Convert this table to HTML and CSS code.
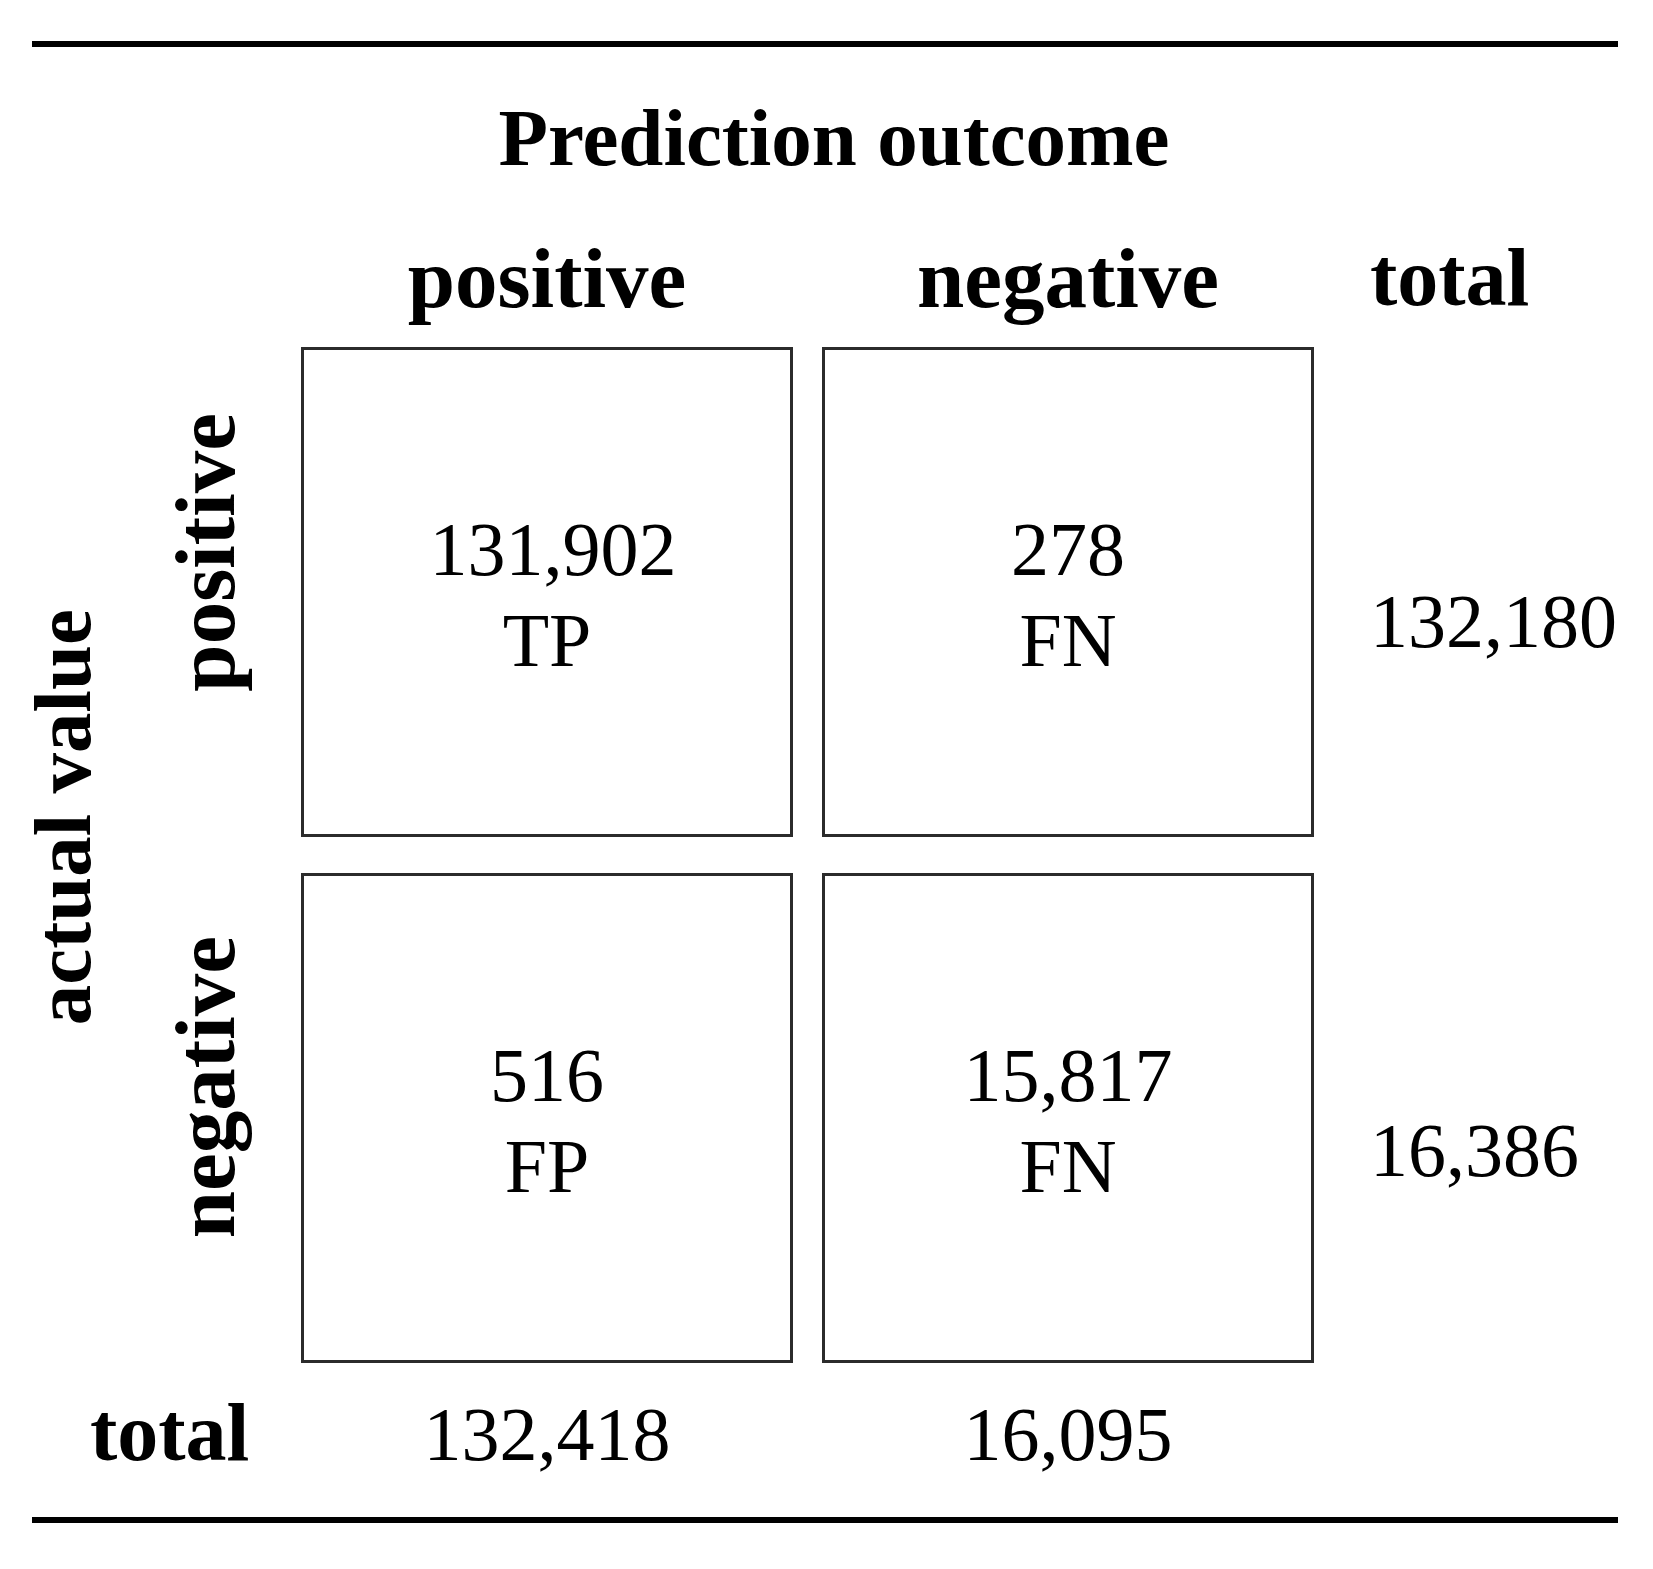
FILE: index.html
```html
<!DOCTYPE html>
<html lang="en">
<head>
<meta charset="utf-8">
<title>Confusion matrix</title>
<link rel="stylesheet" href="styles.css">
</head>
<body>
<div class="table">
  <div class="rule rule-top"></div>
  <div class="title">Prediction outcome</div>
  <div class="matrix">
    <div class="col-head head-pos">positive</div>
    <div class="col-head head-neg">negative</div>
    <div class="col-head head-total">total</div>

    <div class="axis-label">actual value</div>
    <div class="row-label label-pos">positive</div>
    <div class="row-label label-neg">negative</div>

    <div class="cell c1"><span class="num-shift">131,902</span><span>TP</span></div>
    <div class="cell c2"><span>278</span><span>FN</span></div>
    <div class="cell c3"><span>516</span><span>FP</span></div>
    <div class="cell c4"><span>15,817</span><span>FN</span></div>

    <div class="row-total t1">132,180</div>
    <div class="row-total t2">16,386</div>

    <div class="foot-label">total</div>
    <div class="foot b1">132,418</div>
    <div class="foot b2">16,095</div>
  </div>
  <div class="rule rule-bottom"></div>
</div>
</body>
</html>
```

FILE: styles.css
```css
html, body {
  margin: 0;
  padding: 0;
  background: #ffffff;
}

body {
  font-family: "Liberation Serif", "Times New Roman", serif;
  color: #000000;
}

.table {
  width: 1586px;
  margin-left: 32px;
  padding-top: 41px;
  display: flex;
  flex-direction: column;
}

.rule {
  height: 6px;
  background: #000000;
}

.title {
  margin-top: 51px;
  padding-left: 18px;
  font-size: 81px;
  line-height: 80px;
  font-weight: bold;
  text-align: center;
}

.matrix {
  margin-top: 59px;
  display: grid;
  grid-template-columns: 108px 161px 492px 29px 492px 1fr;
  grid-template-rows: 82px 28px 490px 36px 490px 26px 91px;
  grid-template-areas:
    ".  .  hp .  hn ht"
    ".  .  .  .  .  . "
    "av pl c1 .  c2 t1"
    "av .  .  .  .  . "
    "av nl c3 .  c4 t2"
    ".  .  .  .  .  . "
    "tl tl b1 .  b2 . ";
}

.col-head {
  font-size: 85px;
  line-height: 82px;
  font-weight: bold;
  white-space: nowrap;
}

.head-pos { grid-area: hp; text-align: center; }
.head-neg { grid-area: hn; text-align: center; }
.head-total { grid-area: ht; padding-left: 56px; font-size: 82px; }

.axis-label,
.row-label {
  writing-mode: vertical-rl;
  transform: rotate(180deg);
  font-weight: bold;
  white-space: nowrap;
  justify-self: start;
  align-self: start;
}

.axis-label {
  grid-area: av;
  font-size: 81px;
  line-height: 72px;
  margin-top: 262px;
  margin-left: -5px;
}

.row-label {
  font-size: 85px;
  line-height: 85px;
  margin-left: 23px;
}

.label-pos { grid-area: pl; margin-top: 66px; }
.label-neg { grid-area: nl; margin-top: 63px; }

.cell {
  border: 3px solid #2b2b2b;
  display: flex;
  flex-direction: column;
  align-items: center;
  justify-content: center;
  padding-top: 6px;
  font-size: 76px;
  line-height: 91px;
  text-align: center;
}

.num-shift {
  padding-left: 12px;
}

.c1 { grid-area: c1; }
.c2 { grid-area: c2; }
.c3 { grid-area: c3; }
.c4 { grid-area: c4; }

.row-total {
  font-size: 76px;
  line-height: 91px;
  padding-left: 56px;
  align-self: center;
  margin-top: 58px;
}

.t1 { grid-area: t1; }
.t2 { grid-area: t2; margin-top: 64px; }

.foot-label {
  grid-area: tl;
  font-size: 82px;
  line-height: 87px;
  font-weight: bold;
  padding-left: 58px;
}

.foot {
  font-size: 76px;
  line-height: 91px;
  text-align: center;
}

.b1 { grid-area: b1; }
.b2 { grid-area: b2; }

.rule-bottom {
  margin-top: 37px;
}
```
